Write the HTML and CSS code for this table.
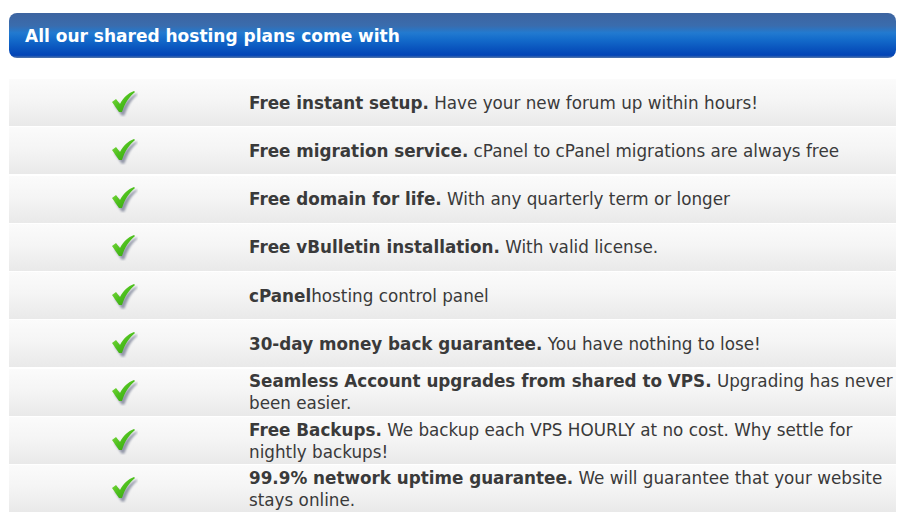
FILE: index.html
```html
<!DOCTYPE html>
<html>
<head>
<meta charset="utf-8">
<link rel="stylesheet" href="styles.css">
</head>
<body>
<svg width="0" height="0" class="defs">
  <defs>
    <linearGradient id="g" x1="0" y1="0" x2="1" y2="1">
      <stop offset="0" stop-color="#8be04a"/>
      <stop offset="0.5" stop-color="#4cbf1c"/>
      <stop offset="1" stop-color="#2f9a0e"/>
    </linearGradient>
    <filter id="sh" x="-30%" y="-30%" width="160%" height="160%">
      <feGaussianBlur stdDeviation="0.9"/>
    </filter>
    <symbol id="chk" viewBox="0 0 28 26">
      <path d="M3 13 L7 10 L11 15 C14 9 19 4 25 1 L26 2 C20 7 16 14 13 23 L10 23 Z" fill="#4a5270" opacity="0.55" filter="url(#sh)" transform="translate(1.5,1.5)"/>
      <path d="M2 11 L6 8 L10 13 C13 7 18 2 24 0 L25 1 C19 6 15 12 12 21 L9 21 Z" fill="url(#g)"/>
    </symbol>
  </defs>
</svg>
<div class="wrap">
  <div class="head">All our shared hosting plans come with</div>
  <div class="list">
    <div class="row"><div class="ic"><svg class="check"><use href="#chk"/></svg></div><div class="tx"><b>Free instant setup.</b> Have your new forum up within hours!</div></div>
    <div class="row"><div class="ic"><svg class="check"><use href="#chk"/></svg></div><div class="tx"><b>Free migration service.</b> cPanel to cPanel migrations are always free</div></div>
    <div class="row"><div class="ic"><svg class="check"><use href="#chk"/></svg></div><div class="tx"><b>Free domain for life.</b> With any quarterly term or longer</div></div>
    <div class="row"><div class="ic"><svg class="check"><use href="#chk"/></svg></div><div class="tx"><b>Free vBulletin installation.</b> With valid license.</div></div>
    <div class="row"><div class="ic"><svg class="check"><use href="#chk"/></svg></div><div class="tx"><b>cPanel</b>hosting control panel</div></div>
    <div class="row"><div class="ic"><svg class="check"><use href="#chk"/></svg></div><div class="tx"><b>30-day money back guarantee.</b> You have nothing to lose!</div></div>
    <div class="row"><div class="ic"><svg class="check"><use href="#chk"/></svg></div><div class="tx"><b>Seamless Account upgrades from shared to VPS.</b> Upgrading has never been easier.</div></div>
    <div class="row"><div class="ic"><svg class="check"><use href="#chk"/></svg></div><div class="tx"><b>Free Backups.</b> We backup each VPS HOURLY at no cost. Why settle for nightly backups!</div></div>
    <div class="row"><div class="ic"><svg class="check"><use href="#chk"/></svg></div><div class="tx"><b>99.9% network uptime guarantee.</b> We will guarantee that your website stays online.</div></div>
  </div>
</div>
</body>
</html>
```
FILE: styles.css
```css
html, body {
  margin: 0;
  padding: 0;
  background: #ffffff;
}
.defs {
  position: absolute;
  width: 0;
  height: 0;
}
.wrap {
  width: 887px;
  margin-left: 9px;
  padding-top: 13px;
  font-family: "DejaVu Sans", Verdana, sans-serif;
}
.head {
  height: 45px;
  box-sizing: border-box;
  border-radius: 8px;
  padding-left: 16px;
  display: flex;
  align-items: center;
  color: #ffffff;
  font-weight: bold;
  font-size: 17px;
  background: linear-gradient(to bottom, #3d64a0 0%, #3a6cad 28%, #227ad0 44%, #146ccb 58%, #0a55be 78%, #0344b6 94%, #5577aa 100%);
}
.list {
  margin-top: 21px;
  display: flex;
  flex-direction: column;
  gap: 1.3px;
}
.row {
  height: 47px;
  display: grid;
  grid-template-columns: 230px 1fr;
  align-items: center;
  background: linear-gradient(to bottom, #fbfbfb 0%, #f5f5f5 45%, #e9e9e9 100%);
}
.ic {
  display: flex;
  justify-content: center;
  padding-top: 2px;
}
.check {
  width: 28px;
  height: 26px;
}
.tx {
  padding-left: 10px;
  padding-right: 0;
  font-size: 16.8px;
  line-height: 22px;
  color: #3a3a3a;
}
.tx b {
  color: #3a3a3a;
}
```
